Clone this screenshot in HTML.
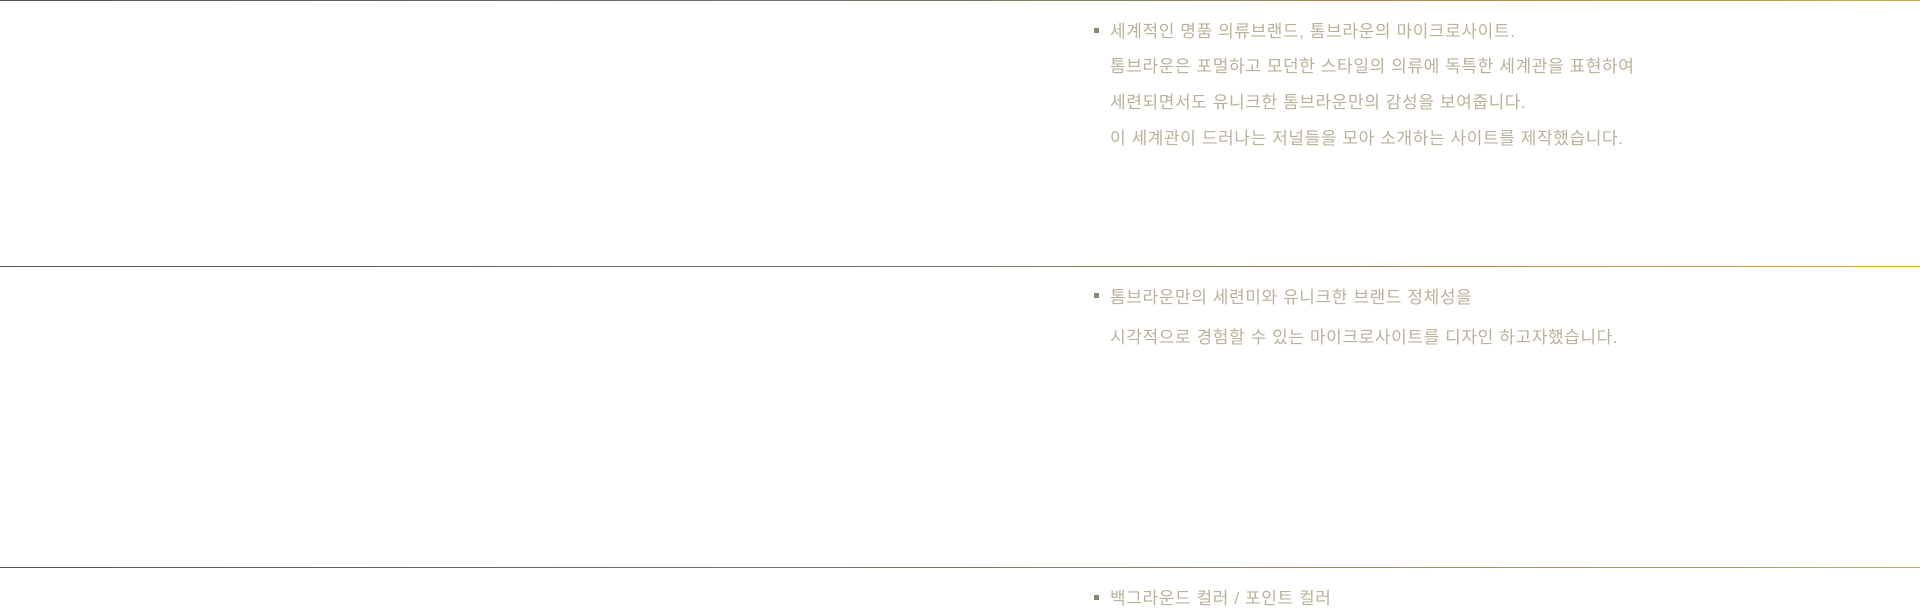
<!DOCTYPE html>
<html><head><meta charset="utf-8"><style>
html,body{margin:0;padding:0;background:#fff;width:1920px;height:606px;overflow:hidden}
.line{position:absolute;left:0;width:1920px;height:1px;background:linear-gradient(to right,#555 0%,#7a7566 50%,#c8a84a 100%)}
.t{position:absolute;left:1110px;font-family:"Liberation Sans","Noto Sans CJK KR",sans-serif;font-size:17px;color:#bab199;white-space:nowrap;line-height:20px;letter-spacing:0.6px}
.b{position:absolute;left:1094px;width:5px;height:5px;background:#8a8470}
</style></head><body>
<div class="line" style="top:0"></div>
<div class="b" style="top:28px"></div>
<div class="t" style="top:22px">세계적인 명품 의류브랜드, 톰브라운의 마이크로사이트.</div>
<div class="t" style="top:57px">톰브라운은 포멀하고 모던한 스타일의 의류에 독특한 세계관을 표현하여</div>
<div class="t" style="top:93px">세련되면서도 유니크한 톰브라운만의 감성을 보여줍니다.</div>
<div class="t" style="top:129px">이 세계관이 드러나는 저널들을 모아 소개하는 사이트를 제작했습니다.</div>
<div class="line" style="top:266px"></div>
<div class="b" style="top:293px"></div>
<div class="t" style="top:288px">톰브라운만의 세련미와 유니크한 브랜드 정체성을</div>
<div class="t" style="top:328px">시각적으로 경험할 수 있는 마이크로사이트를 디자인 하고자했습니다.</div>
<div class="line" style="top:567px"></div>
<div class="b" style="top:595px"></div>
<div class="t" style="top:589px">백그라운드 컬러 / 포인트 컬러</div>
</body></html>
